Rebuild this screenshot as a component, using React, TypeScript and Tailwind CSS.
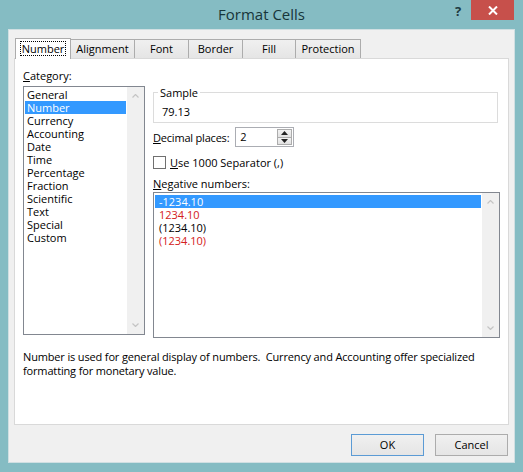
import React from "react";

const categories = [
  "General",
  "Number",
  "Currency",
  "Accounting",
  "Date",
  "Time",
  "Percentage",
  "Fraction",
  "Scientific",
  "Text",
  "Special",
  "Custom",
];

const negatives = [
  { label: "-1234.10", red: false },
  { label: "1234.10", red: true },
  { label: "(1234.10)", red: false },
  { label: "(1234.10)", red: true },
];

const tabs = [
  { label: "Number", w: "w-[56px]" },
  { label: "Alignment", w: "w-[64px]" },
  { label: "Font", w: "w-[54px]" },
  { label: "Border", w: "w-[54px]" },
  { label: "Fill", w: "w-[53px]" },
  { label: "Protection", w: "w-[65px]" },
];

const Caret = ({ up, color = "#c4c4c4" }: { up?: boolean; color?: string }) => (
  <svg width="7" height="4" viewBox="0 0 7 4">
    {up ? (
      <polyline points="0.5,3.5 3.5,0.5 6.5,3.5" fill="none" stroke={color} strokeWidth="1.2" />
    ) : (
      <polyline points="0.5,0.5 3.5,3.5 6.5,0.5" fill="none" stroke={color} strokeWidth="1.2" />
    )}
  </svg>
);

const ScrollBar = () => (
  <div className="w-[17px] h-full bg-[#f0f0f0] flex flex-col items-center justify-between py-[7px]">
    <Caret up />
    <Caret />
  </div>
);

export default function App() {
  return (
    <div className="w-[523px] h-[472px] bg-[#85bcc3] flex flex-col font-['Open_Sans',sans-serif] text-[11px] text-black select-none">
      {/* Title bar */}
      <div className="relative h-[29px] shrink-0">
        <div className="text-center text-[15px] leading-[29px] text-[#17353a]">Format Cells</div>
        <div className="absolute top-0 right-[9px] flex items-start">
          <div className="w-[26px] h-[20px] flex items-center justify-center text-[13px] font-bold text-[#1d3a40] pt-[3px]">
            ?
          </div>
          <div className="w-[43px] h-[20px] bg-[#c7504b] flex items-center justify-center">
            <svg width="10" height="9" viewBox="0 0 10 9">
              <path d="M1 0.5 L9 8.5 M9 0.5 L1 8.5" stroke="white" strokeWidth="2" />
            </svg>
          </div>
        </div>
      </div>

      {/* Dialog body */}
      <div className="flex-1 mx-[8px] mb-[9px] bg-[#f0f0f0] border border-[#d0dfe2] flex flex-col px-[5px] pt-[8px]">
        {/* Tabs */}
        <div className="flex items-end h-[21px] -mb-px pl-[1px] relative z-10">
          {tabs.map((t, i) =>
            i === 0 ? (
              <div
                key={t.label}
                className={`${t.w} h-[21px] bg-white border border-b-0 border-[#acacac] flex items-center justify-center`}
              >
                <span className="border border-dotted border-black px-[1px] leading-[13px] mt-[-1px]">
                  {t.label}
                </span>
              </div>
            ) : (
              <div
                key={t.label}
                className={`${t.w} h-[19px] bg-gradient-to-b from-[#f0f0f0] to-[#e5e5e5] border border-l-0 border-b-0 border-[#acacac] flex items-center justify-center mb-px`}
              >
                {t.label}
              </div>
            )
          )}
        </div>

        {/* Panel */}
        <div className="h-[367px] bg-white border border-[#d9d9d9] pl-[8px] pt-[10px] flex flex-col">
          <div className="flex gap-[8px]">
            {/* Left column */}
            <div className="w-[122px] flex flex-col">
              <div className="h-[13px] leading-[13px]">
                <span className="underline">C</span>ategory:
              </div>
              <div className="mt-[4px] h-[249px] border border-[#828790] flex">
                <div className="flex-1 pt-[1px]">
                  {categories.map((c) => (
                    <div
                      key={c}
                      className={`h-[13px] leading-[13px] mx-[1px] pl-[2px] ${
                        c === "Number" ? "bg-[#3399ff] text-white" : ""
                      }`}
                    >
                      {c}
                    </div>
                  ))}
                </div>
                <ScrollBar />
              </div>
            </div>

            {/* Right column */}
            <div className="w-[347px] flex flex-col">
              <fieldset className="mt-[17px] h-[37px] border border-[#dcdcdc] pl-[8px] mr-[2px]">
                <legend className="ml-[-4px] px-[2px] leading-[13px]">Sample</legend>
                <div className="leading-[13px] mt-[6px]">79.13</div>
              </fieldset>

              <div className="mt-[4px] flex items-center h-[20px]">
                <span className="leading-[13px] tracking-[-0.2px]">
                  <span className="underline">D</span>ecimal places:
                </span>
                <div className="ml-[6px] w-[59px] h-[20px] border border-[#abadb3] bg-white flex">
                  <div className="flex-1 pl-[4px] leading-[18px]">2</div>
                  <div className="w-[16px] flex flex-col py-[1px] pr-[1px]">
                    <div className="flex-1 border border-[#acacac] bg-gradient-to-b from-[#f2f2f2] to-[#e2e2e2] flex items-center justify-center">
                      <svg width="7" height="4" viewBox="0 0 7 4">
                        <polygon points="0,4 3.5,0 7,4" fill="#222" />
                      </svg>
                    </div>
                    <div className="flex-1 border border-t-0 border-[#acacac] bg-gradient-to-b from-[#f2f2f2] to-[#e2e2e2] flex items-center justify-center">
                      <svg width="7" height="4" viewBox="0 0 7 4">
                        <polygon points="0,0 3.5,4 7,0" fill="#222" />
                      </svg>
                    </div>
                  </div>
                </div>
              </div>

              <div className="mt-[8px] h-[14px] flex items-center">
                <div className="w-[13px] h-[13px] border border-[#707070] bg-white" />
                <span className="ml-[4px] leading-[13px]">
                  <span className="underline">U</span>se 1000 Separator (,)
                </span>
              </div>

              <div className="mt-[8px] h-[13px] leading-[13px]">
                <span className="underline">N</span>egative numbers:
              </div>

              <div className="mt-[2px] h-[146px] border border-[#828790] flex">
                <div className="flex-1 pt-[2px]">
                  {negatives.map((n, i) => (
                    <div
                      key={i}
                      className={`h-[13px] leading-[13px] mx-[1px] pl-[4px] ${
                        i === 0 ? "bg-[#3399ff] text-white" : n.red ? "text-[#d42020]" : ""
                      }`}
                    >
                      {n.label}
                    </div>
                  ))}
                </div>
                <ScrollBar />
              </div>
            </div>
          </div>

          <p className="mt-[12px] leading-[14px] tracking-[-0.15px] pr-[4px]">
            Number is used for general display of numbers.&nbsp; Currency and Accounting offer specialized
            formatting for monetary value.
          </p>
        </div>

        {/* Buttons */}
        <div className="flex justify-end gap-[11px] mt-[9px] pr-[1px]">
          <button className="w-[73px] h-[22px] border border-[#5b9bd5] bg-gradient-to-b from-[#f0f0f0] to-[#e5e5e5] leading-[20px]">
            OK
          </button>
          <button className="w-[73px] h-[22px] border border-[#acacac] bg-gradient-to-b from-[#f0f0f0] to-[#e5e5e5] leading-[20px]">
            Cancel
          </button>
        </div>
      </div>
    </div>
  );
}
